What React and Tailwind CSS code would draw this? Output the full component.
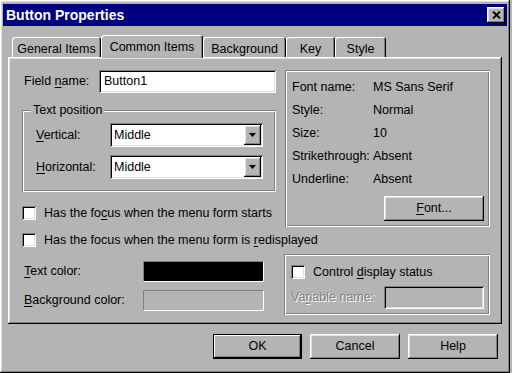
const RAISED = 'shadow-[inset_-1px_-1px_#000,inset_1px_1px_#fff,inset_-2px_-2px_#808080,inset_2px_2px_#dfdfdf]';
const SUNKEN = 'shadow-[inset_1px_1px_#808080,inset_-1px_-1px_#fff,inset_2px_2px_#000,inset_-2px_-2px_#dfdfdf]';
const ETCHED = 'shadow-[inset_1px_1px_#808080,inset_-1px_-1px_#fff,inset_2px_2px_#fff,inset_-2px_-2px_#808080]';
const DEFAULT_BTN = 'shadow-[inset_0_0_0_1px_#000,inset_-2px_-2px_#000,inset_2px_2px_#fff,inset_-3px_-3px_#808080]';

function U({ children }) {
  return <span className="underline decoration-1 underline-offset-[2px]">{children}</span>;
}

function Tab({ label, w, active }) {
  return (
    <div
      className={`${w} ${active ? 'h-[23px] -mb-px relative z-10 pt-[2px]' : 'h-[20px] pt-[4px]'} flex items-center justify-center rounded-t-[3px] bg-[#b4b4b4] shadow-[inset_1px_1px_#fff,inset_-1px_0_#000,inset_-2px_0_#808080]`}
    >
      {label}
    </div>
  );
}

function Check() {
  return <div className={`w-[14px] h-[14px] shrink-0 bg-white ${SUNKEN}`} />;
}

function Select({ value }) {
  return (
    <div className={`w-[153px] h-[24px] bg-white ${SUNKEN} flex items-stretch p-[2px]`}>
      <div className="flex-1 flex items-center pl-[2px]">{value}</div>
      <div className={`w-[17px] bg-[#b4b4b4] ${RAISED} flex items-center justify-center`}>
        <svg width="7" height="4" viewBox="0 0 7 4">
          <polygon points="0,0 7,0 3.5,4" fill="#000" />
        </svg>
      </div>
    </div>
  );
}

function FontRow({ label, value }) {
  return (
    <div className="h-[23px] flex items-center">
      <span className="w-[81px] shrink-0 whitespace-nowrap">{label}</span>
      <span>{value}</span>
    </div>
  );
}

export default function App() {
  return (
    <div className="w-[512px] h-[373px] bg-[#b4b4b4] font-['Liberation_Sans',Arial,sans-serif] text-[12.5px] leading-none text-black select-none">
      <div className={`w-[510px] h-[373px] flex flex-col pt-[4px] px-[3px] bg-[#b4b4b4] ${RAISED}`}>
        {/* title bar */}
        <div className="h-[22px] bg-[#000080] flex items-center justify-between pl-[3px] pr-[2px]">
          <span className="text-white font-bold text-[14px]">Button Properties</span>
          <div className={`w-[18px] h-[16px] bg-[#b4b4b4] ${RAISED} flex items-center justify-center`}>
            <svg width="9" height="8" viewBox="0 0 9 8">
              <path d="M1 0.5 L8 7.5 M8 0.5 L1 7.5" stroke="#000" strokeWidth="1.8" />
            </svg>
          </div>
        </div>

        {/* tabs */}
        <div className="mt-[9px] h-[22px] flex items-end pl-[9px]">
          <Tab label="General Items" w="w-[89px]" />
          <Tab label="Common Items" w="w-[102px]" active />
          <Tab label="Background" w="w-[83px]" />
          <Tab label="Key" w="w-[49px]" />
          <Tab label="Style" w="w-[51px]" />
        </div>

        {/* tab panel */}
        <div className={`mx-[5px] h-[267px] ${RAISED} flex flex-col pt-[13px] pl-[14px]`}>
          <div className="h-[157px] flex">
            <div className="w-[254px] flex flex-col">
              <div className="h-[23px] flex items-center">
                <span className="ml-[2px] w-[75px]">Field <U>n</U>ame:</span>
                <div className={`w-[177px] h-[23px] bg-white ${SUNKEN} flex items-center pl-[5px]`}>Button1</div>
              </div>
              <div className={`relative mt-[17px] h-[82px] ${ETCHED} flex flex-col gap-[8px] pt-[13px] pl-[14px]`}>
                <span className="absolute left-[9px] -top-[6px] px-[2px] bg-[#b4b4b4]">Text position</span>
                <div className="h-[24px] flex items-center">
                  <span className="w-[74px]"><U>V</U>ertical:</span>
                  <Select value="Middle" />
                </div>
                <div className="h-[24px] flex items-center">
                  <span className="w-[74px]"><U>H</U>orizontal:</span>
                  <Select value="Middle" />
                </div>
              </div>
              <div className="mt-[14px] h-[14px] flex items-center gap-[8px] whitespace-nowrap">
                <Check />
                <span>Has the fo<U>c</U>us when the menu form starts</span>
              </div>
            </div>

            <div className={`ml-[9px] w-[205px] h-[157px] ${ETCHED} flex flex-col pt-[6px] pl-[7px] pr-[6px]`}>
              <FontRow label="Font name:" value="MS Sans Serif" />
              <FontRow label="Style:" value="Normal" />
              <FontRow label="Size:" value="10" />
              <FontRow label="Strikethrough:" value="Absent" />
              <FontRow label="Underline:" value="Absent" />
              <div className={`mt-[5px] self-end w-[100px] h-[25px] ${RAISED} flex items-center justify-center`}>
                <span><U>F</U>ont...</span>
              </div>
            </div>
          </div>

          <div className="mt-[6px] h-[14px] flex items-center gap-[8px] whitespace-nowrap">
            <Check />
            <span>Has the focus when the menu form is <U>r</U>edisplayed</span>
          </div>

          <div className="mt-[7px] flex">
            <div className="w-[254px] flex flex-col gap-[8px] pt-[7px]">
              <div className="h-[21px] flex items-center">
                <span className="ml-[2px] w-[119px]"><U>T</U>ext color:</span>
                <div className="w-[121px] h-[21px] bg-black border border-t-[#808080] border-l-[#808080] border-b-white border-r-white" />
              </div>
              <div className="h-[21px] flex items-center">
                <span className="ml-[2px] w-[119px]"><U>B</U>ackground color:</span>
                <div className="w-[121px] h-[21px] bg-[#b4b4b4] border border-t-[#808080] border-l-[#808080] border-b-white border-r-white" />
              </div>
            </div>
            <div className={`ml-[8px] w-[206px] h-[61px] ${ETCHED} flex flex-col pt-[11px] pl-[7px] pr-[6px]`}>
              <div className="h-[14px] flex items-center gap-[8px]">
                <Check />
                <span>Control <U>d</U>isplay status</span>
              </div>
              <div className="mt-[7px] h-[23px] flex items-center justify-between">
                <span className="text-[#808080] [text-shadow:1px_1px_#fff]">Va<U>r</U>iable name:</span>
                <div className={`w-[100px] h-[23px] bg-[#b4b4b4] ${SUNKEN}`} />
              </div>
            </div>
          </div>
        </div>

        {/* dialog buttons */}
        <div className="mt-[10px] flex justify-end gap-[8px] pr-[9px]">
          <div className={`w-[89px] h-[25px] ${DEFAULT_BTN} flex items-center justify-center`}>OK</div>
          <div className={`w-[90px] h-[25px] ${RAISED} flex items-center justify-center`}>Cancel</div>
          <div className={`w-[90px] h-[25px] ${RAISED} flex items-center justify-center`}>Help</div>
        </div>
      </div>
    </div>
  );
}
